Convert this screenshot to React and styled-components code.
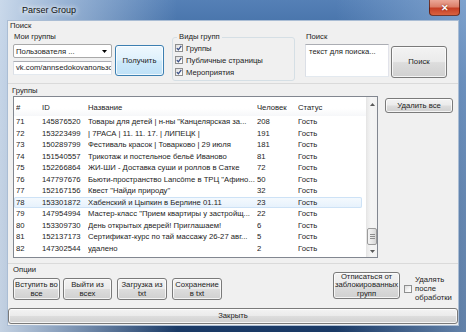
import styled, { createGlobalStyle } from "styled-components";

const GlobalStyle = createGlobalStyle`
  html, body { margin: 0; padding: 0; background: #ffffff; }
  body { font-family: "Liberation Sans", Arial, sans-serif; font-size: 7.7px; color: #1c1c1c; }
  * { box-sizing: border-box; }
`;

const rows = [
  ["71", "145876520", 'Товары для детей | н-ны "Канцелярская за...', "208"],
  ["72", "153223499", "| 7РАСА | 11. 11. 17. | ЛИПЕЦК |", "191"],
  ["73", "150289799", "Фестиваль красок | Товарково | 29 июля", "181"],
  ["74", "151540557", "Трикотаж и постельное бельё Иваново", "81"],
  ["75", "152266864", "ЖИ-ШИ - Доставка суши и роллов в Сатке", "72"],
  ["76", "147797676", 'Бьюти-пространство Lancôme в ТРЦ "Афино...', "50"],
  ["77", "152167156", 'Квест "Найди природу"', "32"],
  ["78", "153301872", "Хабенский и Цыпкин в Берлине 01.11", "23"],
  ["79", "147954994", 'Мастер-класс "Прием квартиры у застройщ...', "22"],
  ["80", "153309730", "День открытых дверей! Приглашаем!", "6"],
  ["81", "152137173", "Сертификат-курс по тай массажу 26-27 авг...", "5"],
  ["82", "147302544", "удалено", "2"],
];

const Window = styled.div`
  width: 466px;
  height: 332px;
  display: flex;
  flex-direction: column;
  padding: 0 7px 6px 7px;
  overflow: hidden;
  background:
    linear-gradient(90deg, rgba(214, 226, 240, 0.9) 0%, rgba(190, 208, 230, 0.65) 14%, rgba(40, 80, 135, 0) 38%, rgba(40, 80, 135, 0) 72%, rgba(160, 190, 225, 0.55) 100%),
    linear-gradient(180deg, #5580b6 0%, #2b5891 25%, #1f4577 60%, #1a3a66 100%);
`;

const TitleBar = styled.div`
  height: 20px;
  display: flex;
  align-items: flex-start;
`;

const Caption = styled.div`
  padding-left: 15px;
  line-height: 20px;
  font-size: 9px;
  color: #111;
  text-shadow: 0 0 4px #fff, 0 0 6px rgba(255, 255, 255, 0.9);
`;

const CloseBox = styled.div`
  margin-left: auto;
  margin-right: -1px;
  width: 31px;
  height: 16px;
  border: 1px solid rgba(70, 20, 15, 0.75);
  border-top: none;
  border-radius: 0 0 4px 4px;
  background: linear-gradient(180deg, #eba797 0%, #dc7f69 45%, #c63f25 55%, #d9623f 100%);
  color: #fff;
  font-size: 9px;
  font-weight: bold;
  display: flex;
  align-items: center;
  justify-content: center;
  text-shadow: 0 0 2px #6b1a10;
`;

const Client = styled.div`
  flex: 1;
  display: flex;
  flex-direction: column;
  background: #f0f0f0;
  border: 1px solid #aabdd4;
`;

const Section = styled.div`
  height: ${(p) => p.$h}px;
  display: flex;
  flex-direction: ${(p) => (p.$row ? "row" : "column")};
  border-bottom: ${(p) => (p.$line ? "1px solid #dadada" : "none")};
`;

const SectionTitle = styled.div`
  margin: ${(p) => p.$mt || 0}px 0 0 ${(p) => p.$ml || 2}px;
  line-height: 10px;
  height: 10px;
`;

const SearchRow = styled.div`
  display: flex;
  align-items: flex-start;
`;

const Column = styled.div`
  display: flex;
  flex-direction: column;
  width: ${(p) => p.$w}px;
  margin-left: ${(p) => p.$ml || 0}px;
`;

const FieldLabel = styled.div`
  margin-top: 1px;
  padding-left: 1px;
  line-height: 10px;
  height: 10px;
`;

const ComboBox = styled.div`
  margin-top: 2px;
  height: 14px;
  display: flex;
  align-items: center;
  padding: 0 4px 0 2px;
  background: #fff;
  border: 1px solid #a9a9a9;
  border-radius: 2px;
  white-space: nowrap;
`;

const ComboArrow = styled.svg`
  margin-left: auto;
  width: 5px;
  height: 3px;
`;

const TextBox = styled.div`
  margin-top: ${(p) => p.$mt || 3}px;
  height: ${(p) => p.$h || 14}px;
  padding: ${(p) => (p.$multi ? "2px 3px" : "0 2px")};
  line-height: ${(p) => (p.$multi ? "10px" : "12px")};
  background: #fff;
  border: 1px solid #abadb3;
  border-color: #abadb3 #e2e3ea #e3e9ef #dbdfe6;
  white-space: nowrap;
  overflow: hidden;
`;

const PushButton = styled.div`
  width: ${(p) => p.$w}px;
  height: ${(p) => p.$h}px;
  margin-left: ${(p) => p.$ml || 0}px;
  margin-top: ${(p) => p.$mt || 0}px;
  flex-shrink: 0;
  display: flex;
  align-items: center;
  justify-content: center;
  text-align: center;
  line-height: ${(p) => p.$lh || 10}px;
  white-space: nowrap;
  border: 1px solid ${(p) => (p.$default ? "#3c7fb1" : "#7a7a7a")};
  border-radius: 3px;
  background: ${(p) =>
    p.$default
      ? "linear-gradient(180deg, #eef8fe 0%, #dff1fc 48%, #cde9fa 52%, #bfe1f7 100%)"
      : "linear-gradient(180deg, #f3f3f3 0%, #ebebeb 48%, #dddddd 52%, #d0d0d0 100%)"};
  box-shadow: inset 0 0 0 1px rgba(255, 255, 255, 0.75);
`;

const TypesFrame = styled.div`
  margin: 6px 0 0 8px;
  width: 123px;
  height: 44px;
  border: 1px solid #d5dfe5;
  border-radius: 3px;
  padding-left: 2px;
  display: flex;
  flex-direction: column;
`;

const Legend = styled.div`
  margin: -6px 0 0 2px;
  padding: 0 2px;
  align-self: flex-start;
  background: #f0f0f0;
  line-height: 10px;
  height: 10px;
`;

const CheckRow = styled.div`
  height: 12px;
  display: flex;
  align-items: center;
  gap: 3px;
  white-space: nowrap;
`;

const Box = styled.div`
  width: 8px;
  height: 8px;
  flex-shrink: 0;
  border: 1px solid #8e8f8f;
  background: linear-gradient(135deg, #dcdcdc 0%, #f6f6f6 60%, #ffffff 100%);
  display: flex;
  align-items: center;
  justify-content: center;
`;

const CheckBox = ({ checked }) => (
  <Box>
    {checked && (
      <svg width="6" height="6" viewBox="0 0 6 6">
        <path d="M0.8 3.1 L2.4 4.8 L5.3 0.9" fill="none" stroke="#3a4f86" strokeWidth="1.3" />
      </svg>
    )}
  </Box>
);

const GroupsRow = styled.div`
  display: flex;
  align-items: flex-start;
`;

const ListView = styled.div`
  margin-left: 5px;
  width: 365px;
  height: 162px;
  border: 1px solid #828790;
  background: #fff;
  display: flex;
`;

const ListArea = styled.div`
  flex: 1;
  display: flex;
  flex-direction: column;
  overflow: hidden;
`;

const grid = `
  display: grid;
  grid-template-columns: 26px 46px 169px 41px 1fr;
  padding-left: 2px;
  white-space: nowrap;
`;

const HeaderRow = styled.div`
  ${grid}
  height: 19px;
  align-items: end;
  padding-bottom: 3px;
  line-height: 10px;
  background: linear-gradient(180deg, #ffffff 0%, #ffffff 60%, #f6f7f9 100%);
`;

const Row = styled.div`
  ${grid}
  height: 11.5px;
  line-height: 11.5px;
  margin-right: 4px;
  border-radius: 2px;
  background: ${(p) => (p.$hot ? "linear-gradient(180deg, #f5fafe 0%, #e6f1fc 100%)" : "transparent")};
  box-shadow: ${(p) => (p.$hot ? "inset 0 0 0 1px #cde2f6" : "none")};
`;

const Cell = styled.div`
  overflow: hidden;
`;

const ScrollBar = styled.div`
  width: 11px;
  display: flex;
  flex-direction: column;
  background: linear-gradient(90deg, #e9e9e9 0%, #f5f5f5 40%, #f2f2f2 100%);
  border-left: 1px solid #e6e6e6;
`;

const ScrollArrow = styled.div`
  height: ${(p) => p.$h}px;
  display: flex;
  align-items: center;
  justify-content: center;
`;

const Track = styled.div`
  flex: 1;
  display: flex;
  flex-direction: column;
`;

const Thumb = styled.div`
  margin-top: auto;
  height: 17px;
  border: 1px solid #9b9b9b;
  border-radius: 2px;
  background: linear-gradient(90deg, #f4f4f4 0%, #e8e8e8 50%, #d6d6d6 100%);
  display: flex;
  flex-direction: column;
  align-items: center;
  justify-content: center;
  gap: 1px;
`;

const Grip = styled.div`
  width: 5px;
  height: 1px;
  background: #8c8c8c;
`;

const ButtonRow = styled.div`
  display: flex;
  margin: 3px 0 0 5px;
`;

const RightBlock = styled.div`
  margin-left: auto;
  display: flex;
  align-items: flex-start;
`;

const CheckLabel = styled.div`
  width: 40px;
  margin: 11px 3px 0 3px;
  line-height: 9px;
`;

const SmallBox = styled.div`
  margin: 21px 0 0 4px;
`;

const CloseButton = styled(PushButton)`
  margin-top: 2px;
`;

const Arrow = ({ up }) => (
  <svg width="5" height="3" viewBox="0 0 5 3">
    <path d={up ? "M0 3 L2.5 0 L5 3 Z" : "M0 0 L5 0 L2.5 3 Z"} fill="#5a5a5a" />
  </svg>
);

export default function App() {
  return (
    <>
      <GlobalStyle />
      <Window>
        <TitleBar>
          <Caption>Parser Group</Caption>
          <CloseBox>✕</CloseBox>
        </TitleBar>
        <Client>
          <Section $h={63} $line>
            <SectionTitle>Поиск</SectionTitle>
            <SearchRow>
              <Column $w={99} $ml={5}>
                <FieldLabel>Мои группы</FieldLabel>
                <ComboBox>
                  Пользователя ...
                  <ComboArrow viewBox="0 0 5 3">
                    <path d="M0 0 L5 0 L2.5 3 Z" fill="#000" />
                  </ComboArrow>
                </ComboBox>
                <TextBox>vk.com/annsedokovaпользователя</TextBox>
              </Column>
              <PushButton $w={49} $h={31} $ml={3} $mt={14} $default>
                Получить
              </PushButton>
              <TypesFrame>
                <Legend>Виды групп</Legend>
                <CheckRow>
                  <CheckBox checked />
                  Группы
                </CheckRow>
                <CheckRow>
                  <CheckBox checked />
                  Публичные страницы
                </CheckRow>
                <CheckRow>
                  <CheckBox checked />
                  Мероприятия
                </CheckRow>
              </TypesFrame>
              <Column $w={84} $ml={10}>
                <FieldLabel>Поиск</FieldLabel>
                <TextBox $mt={2} $h={33} $multi>
                  текст для поиска...
                </TextBox>
              </Column>
              <PushButton $w={56} $h={32} $ml={2} $mt={15}>
                Поиск
              </PushButton>
            </SearchRow>
          </Section>

          <Section $h={180} $line>
            <SectionTitle $ml={4} $mt={2}>
              Группы
            </SectionTitle>
            <GroupsRow>
              <ListView>
                <ListArea>
                  <HeaderRow>
                    <Cell>#</Cell>
                    <Cell>ID</Cell>
                    <Cell>Название</Cell>
                    <Cell>Человек</Cell>
                    <Cell>Статус</Cell>
                  </HeaderRow>
                  {rows.map((r) => (
                    <Row key={r[0]} $hot={r[0] === "78"}>
                      <Cell>{r[0]}</Cell>
                      <Cell>{r[1]}</Cell>
                      <Cell>{r[2]}</Cell>
                      <Cell>{r[3]}</Cell>
                      <Cell>Гость</Cell>
                    </Row>
                  ))}
                </ListArea>
                <ScrollBar>
                  <ScrollArrow $h={14}>
                    <Arrow up />
                  </ScrollArrow>
                  <Track>
                    <Thumb>
                      <Grip />
                      <Grip />
                      <Grip />
                    </Thumb>
                  </Track>
                  <ScrollArrow $h={12}>
                    <Arrow />
                  </ScrollArrow>
                </ScrollBar>
              </ListView>
              <PushButton $w={68} $h={15} $ml={7} $mt={2}>
                Удалить все
              </PushButton>
            </GroupsRow>
          </Section>

          <Section $h={42} $row>
            <Column>
              <SectionTitle $ml={5} $mt={1}>
                Опции
              </SectionTitle>
              <ButtonRow>
                <PushButton $w={47} $h={22} $lh={9}>
                  Вступить во
                  <br />
                  все
                </PushButton>
                <PushButton $w={49} $h={22} $ml={3} $lh={9}>
                  Выйти из
                  <br />
                  всех
                </PushButton>
                <PushButton $w={50} $h={22} $ml={5} $lh={9}>
                  Загрузка из
                  <br />
                  txt
                </PushButton>
                <PushButton $w={50} $h={22} $ml={5} $lh={9}>
                  Сохранение
                  <br />в txt
                </PushButton>
              </ButtonRow>
            </Column>
            <RightBlock>
              <PushButton $w={67} $h={27} $mt={8} $lh={8.5}>
                Отписаться от
                <br />
                заблокированных
                <br />
                групп
              </PushButton>
              <SmallBox>
                <CheckBox />
              </SmallBox>
              <CheckLabel>
                Удалять
                <br />
                после
                <br />
                обработки
              </CheckLabel>
            </RightBlock>
          </Section>

          <CloseButton $w={450} $h={16}>
            Закрыть
          </CloseButton>
        </Client>
      </Window>
    </>
  );
}
